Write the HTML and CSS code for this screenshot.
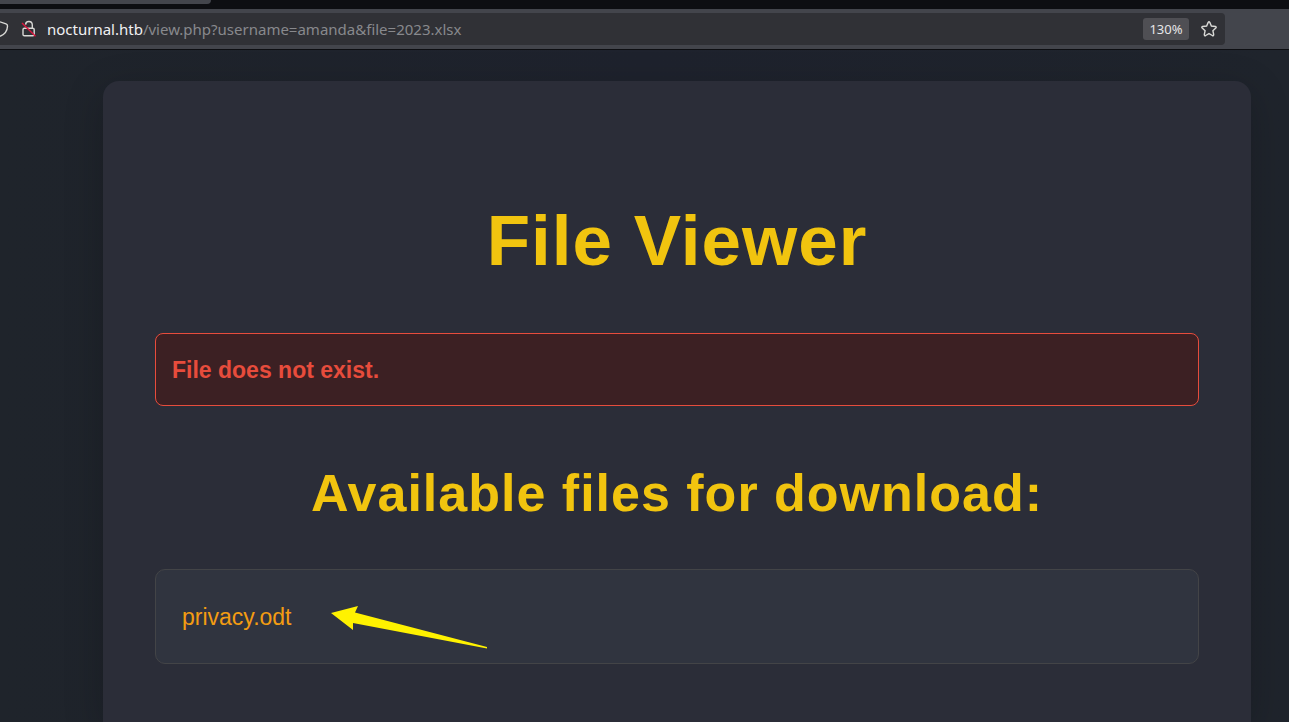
FILE: index.html
```html
<!DOCTYPE html>
<html lang="en">
<head>
<meta charset="utf-8">
<title>File Viewer</title>
<link rel="stylesheet" href="styles.css">
</head>
<body>
<header class="browser">
  <div class="tabs"><div class="tab"></div></div>
  <div class="toolbar">
    <div class="urlbar">
      <svg class="shield" width="9" height="18" viewBox="0 0 9 18" aria-hidden="true"><path d="M0 1.8 L6 3.8 Q7.6 4.3 7.5 6.2 C7.3 11 4.5 14.5 0 16.3"/></svg>
      <svg class="lock" width="16" height="18" viewBox="0 0 16 18" aria-hidden="true"><path d="M4.6 4.6 V4.6 C4.8 0.4 11.2 0.4 11.3 5 V8.2 M4.6 8.2 H11.8 Q13.2 8.2 13.2 9.6 V14.4 Q13.2 15.8 11.8 15.8 H3.4 Q2 15.8 2 14.4 V9.6 Q2 8.2 3.4 8.2 H5"/><path class="slash" d="M1 3 L14.5 16.3"/></svg>
      <div class="address"><span class="host">nocturnal.htb</span><span class="path">/view.php?username=amanda&amp;file=2023.xlsx</span></div>
      <button class="zoom" type="button">130%</button>
      <button class="star" type="button" aria-label="Bookmark this page"><svg width="18" height="18" viewBox="0 0 18 18" aria-hidden="true"><path d="M8.2 2.4 Q9 1 9.8 2.4 L11.4 6 L15.4 6.5 Q16.8 6.9 15.8 8 L12.9 10.7 L13.7 14.6 Q13.7 16.2 12.3 15.5 L9 13.6 L5.7 15.5 Q4.3 16.2 4.3 14.6 L5.1 10.7 L2.2 8 Q1.2 6.9 2.6 6.5 L6.6 6 Z"/></svg></button>
    </div>
  </div>
</header>
<main class="page">
  <section class="card">
    <h1 class="title">File Viewer</h1>
    <div class="error" role="alert">File does not exist.</div>
    <h2 class="subtitle">Available files for download:</h2>
    <ul class="files">
      <li class="file">
        <a class="file-link" href="#">privacy.odt</a>
        <svg class="arrow" width="158" height="44" viewBox="0 0 158 44" aria-hidden="true"><path d="M1 8 L28 1 L25 7.5 L157 42 V43.5 L23 18 L23 25 Z"/></svg>
      </li>
    </ul>
  </section>
</main>
</body>
</html>
```
FILE: styles.css
```css
* { box-sizing: border-box; }
body {
  margin: 0;
  min-height: 100vh;
  display: flex;
  flex-direction: column;
  background: #1f232d;
  font-family: "Liberation Sans", Arial, sans-serif;
}
.tabs { height: 9px; background: #0d0e12; }
.tab { width: 211px; height: 4px; background: #43454c; border-radius: 0 0 4px 0; }
.toolbar {
  height: 41px;
  padding: 4px 64px 4px 0;
  background: #43454c;
  border-bottom: 1px solid #0d0e12;
}
.urlbar {
  display: flex;
  align-items: center;
  height: 32px;
  background: #303136;
  border-radius: 0 4px 4px 0;
  font-family: "Noto Sans", sans-serif;
}
.urlbar svg { fill: none; stroke: #d9d9d6; stroke-width: 1.4; display: block; }
.lock { margin: 0 10px 0 12px; }
.urlbar .slash { stroke: #dc143c; }
.address { flex: 1; font-size: 15px; line-height: 20px; color: #88898d; white-space: nowrap; }
.host { color: #f0f0f2; }
.zoom, .star { border: 0; padding: 0; background: none; }
.zoom {
  width: 46px;
  height: 22px;
  margin-right: 11px;
  border-radius: 3px;
  background: #4f4f54;
  color: #e6e6e8;
  font: 13px/22px "Noto Sans", sans-serif;
}
.star { margin-right: 7px; }
.page {
  flex: 1;
  display: flex;
  padding: 31px 38px 0 103px;
  background: linear-gradient(90deg, #1f242b, #1e222d 50%, #1f242c);
}
.card {
  flex: 1;
  padding: 119px 52px 52px;
  background: #2b2d38;
  border-radius: 16px 16px 0 0;
  box-shadow: 0 10px 40px rgba(0, 0, 0, 0.2);
}
.title, .subtitle {
  margin: 0;
  color: #f1c40f;
  font-weight: bold;
  letter-spacing: 1px;
  text-align: center;
}
.title { font-size: 71px; line-height: 82px; }
.error {
  margin: 51px 0 52px;
  padding: 21px 16px 19px;
  border: 1px solid #e74c3c;
  border-radius: 8px;
  background: #3c2023;
  color: #e74c3c;
  font-size: 23px;
  font-weight: bold;
  line-height: 31px;
}
.subtitle { font-size: 52px; line-height: 70px; }
.files {
  margin: 41px 0 0;
  padding: 0;
  list-style: none;
}
.file {
  display: flex;
  align-items: center;
  position: relative;
  padding: 32px 26px 30px;
  border: 1px solid #434447;
  border-radius: 10px;
  background: #30343f;
  line-height: 31px;
}
.file-link { color: #f39c12; font-size: 23px; text-decoration: none; }
.arrow { position: absolute; left: 174px; top: 35px; fill: #fff200; }
```
